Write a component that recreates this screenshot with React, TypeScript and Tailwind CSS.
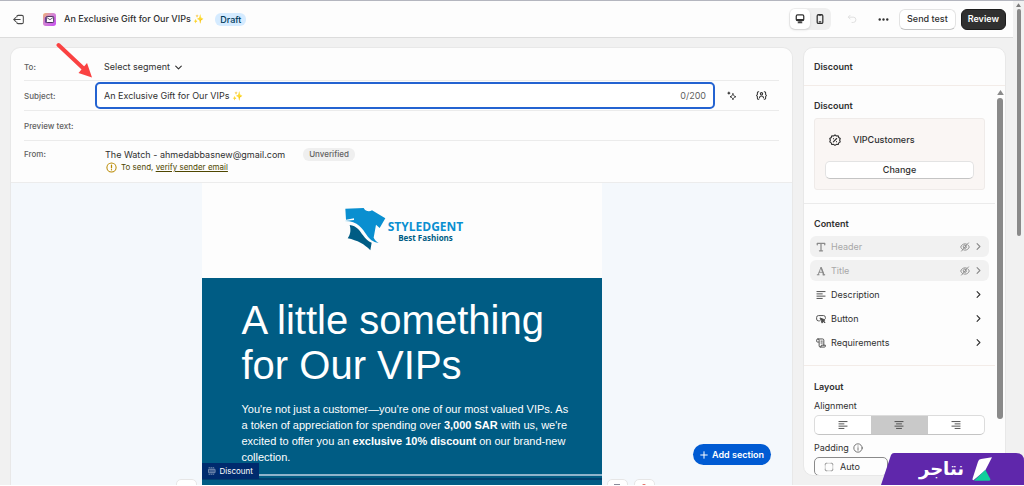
import { useState } from "react";
import type { ReactNode } from "react";

type IconProps = { className?: string };

type ContentItem = {
  label: string;
  icon: (props: IconProps) => ReactNode;
  hidden?: boolean;
};

type Align = "left" | "center" | "right";

// --- ICONS ---
const stroke = {
  fill: "none",
  stroke: "currentColor",
  strokeWidth: 1.5,
  strokeLinecap: "round" as const,
  strokeLinejoin: "round" as const,
  viewBox: "0 0 16 16",
  "aria-hidden": true,
};

function ExitIcon({ className }: IconProps) {
  return (
    <svg {...stroke} className={className}>
      <path d="M5.5 4.5V4A2 2 0 0 1 7.500 2H13a2 2 0 0 1 2 2v8a2 2 0 0 1-2 2H7.500A2 2 0 0 1 5.500 12v-.5" />
      <path d="M10.500 8H1M3.800 5.200 1 8l2.800 2.800" />
    </svg>
  );
}

function DesktopIcon({ className }: IconProps) {
  return (
    <svg {...stroke} className={className}>
      <rect x="2" y="1.500" width="12" height="9" rx="2" strokeWidth="2" />
      <path d="M2.500 8.800h11" strokeWidth="2" />
      <path d="M5 14h6M6.500 11v3M9.500 11v3" strokeWidth="1.800" />
    </svg>
  );
}

function MobileIcon({ className }: IconProps) {
  return (
    <svg {...stroke} strokeWidth={2} className={className}>
      <rect x="3.500" y="1" width="9" height="14" rx="2" />
      <path d="M6.500 1.800h3M6.800 12.500h2.400" />
    </svg>
  );
}

function UndoIcon({ className }: IconProps) {
  return (
    <svg {...stroke} className={className}>
      <path d="M5 2 2 5l3 3M2.500 5H10a4 4 0 0 1 0 8.500H8" />
    </svg>
  );
}

function DotsIcon({ className }: IconProps) {
  return (
    <svg viewBox="0 0 16 16" fill="currentColor" aria-hidden className={className}>
      <circle cx="2.500" cy="8" r="1.700" />
      <circle cx="8" cy="8" r="1.700" />
      <circle cx="13.500" cy="8" r="1.700" />
    </svg>
  );
}

function ChevronDown({ className }: IconProps) {
  return (
    <svg {...stroke} strokeWidth={2} className={className}>
      <path d="m3 5.500 5 5 5-5" />
    </svg>
  );
}

function ChevronRight({ className }: IconProps) {
  return (
    <svg {...stroke} strokeWidth={2} className={className}>
      <path d="m5.500 3 5 5-5 5" />
    </svg>
  );
}

function MagicIcon({ className }: IconProps) {
  return (
    <svg {...stroke} className={className}>
      <path d="M9.500 4.500c.6 2.600 1.600 3.800 4.700 4.700-3.100.9-4.100 2.100-4.700 4.800-.6-2.700-1.600-3.900-4.700-4.800 3.100-.9 4.100-2.100 4.700-4.700Z" />
      <path d="M3 1.800v3M1.500 3.300h3" strokeWidth="1.800" />
    </svg>
  );
}

function VariableIcon({ className }: IconProps) {
  return (
    <svg {...stroke} className={className}>
      <path d="M4 2.500H3.500A1.500 1.500 0 0 0 2 4v2.500L.8 8 2 9.500V12a1.500 1.500 0 0 0 1.500 1.500H4M12 2.500h.5A1.500 1.500 0 0 1 14 4v2.500L15.200 8 14 9.500V12a1.500 1.500 0 0 1-1.500 1.500H12" />
      <circle cx="8" cy="5.500" r="1.700" />
      <path d="M5 11.500c.4-3.600 5.600-3.600 6 0" />
    </svg>
  );
}

function AlertIcon({ className }: IconProps) {
  return (
    <svg {...stroke} className={className}>
      <circle cx="8" cy="8" r="6.700" />
      <path d="M8 4.500v4M8 11v.3" strokeWidth="1.800" />
    </svg>
  );
}

function InfoIcon({ className }: IconProps) {
  return (
    <svg {...stroke} strokeWidth={1.300} className={className}>
      <circle cx="8" cy="8" r="6.700" />
      <path d="M8 7.500v4M8 4.700v.3" />
    </svg>
  );
}

function DiscountIcon({ className }: IconProps) {
  return (
    <svg {...stroke} className={className}>
      <path d="M8 1.200 9.900 2.600 12.300 2.400 13 4.700 15 6 14.200 8.300 15 10.500 13 11.800 12.300 14 9.900 13.800 8 15.200 6.100 13.800 3.700 14 3 11.800 1 10.500 1.800 8.300 1 6 3 4.700 3.700 2.400 6.100 2.600Z" />
      <path d="m5.800 10.400 4.400-4.400M6 6v.2M10 10v.2" />
    </svg>
  );
}

function HeaderIcon({ className }: IconProps) {
  return (
    <svg {...stroke} strokeWidth={2} className={className}>
      <path d="M2 4.500V2h12v2.500M8 2v12M5.500 14h5" />
    </svg>
  );
}

function TitleIcon({ className }: IconProps) {
  return (
    <svg {...stroke} className={className}>
      <path d="M3.500 14 8 2l4.500 12M5 10h6M2 14h3M11 14h3" />
      <path d="m8.500 3 4 11" strokeWidth="2.200" />
    </svg>
  );
}

function LeftLines({ className }: IconProps) {
  return (
    <svg {...stroke} className={className}>
      <path d="M1.500 2.500h13M1.500 6.200h8.500M1.500 9.800h13M1.500 13.500h8.500" />
    </svg>
  );
}

function ButtonIcon({ className }: IconProps) {
  return (
    <svg {...stroke} className={className}>
      <path d="M5.500 11H4a3 3 0 0 1-3-3V5.500a3 3 0 0 1 3-3h8a3 3 0 0 1 3 3V7" />
      <path d="m7 6.500 7.500 3-3 1.300L10 14Z" fill="currentColor" />
      <path d="m11.500 11 2.500 2.500" strokeWidth="2" />
    </svg>
  );
}

function ReceiptIcon({ className }: IconProps) {
  return (
    <svg {...stroke} className={className}>
      <path d="M4 6.500H2.500A1.500 1.500 0 0 1 1 5V3.500a2 2 0 0 1 4 0v9a2 2 0 0 0 2 2h6.500A1.500 1.500 0 0 0 15 13v-1.500H8.500V13a1.500 1.500 0 0 1-1.500 1.500M3 1.500h7.500a2 2 0 0 1 2 2v8M8 5h2M8 8h2" />
    </svg>
  );
}

function HideIcon({ className }: IconProps) {
  return (
    <svg {...stroke} className={className}>
      <path d="M4.500 12.200C2.800 11.300 1.600 9.600 1.200 8 2 5.200 4.600 3 8 3c1 0 2 .2 2.800.6M13.300 5.400c.7.8 1.200 1.700 1.500 2.600-.8 2.800-3.400 5-6.800 5-.6 0-1.100 0-1.600-.2M2.500 14.500l11-13M6 9.300a2.400 2.400 0 0 1 3.200-3.600M10.300 7.600a2.400 2.400 0 0 1-2.500 2.800" />
    </svg>
  );
}

function AlignIcon({ align, className }: IconProps & { align: Align }) {
  const paths = {
    left: "M1.500 2.500h13M1.500 6.200h8M1.500 9.800h13M1.500 13.500h8",
    center: "M1.500 2.500h13M4 6.200h8M1.500 9.800h13M4 13.500h8",
    right: "M1.500 2.500h13M6.500 6.200h8M1.500 9.800h13M6.500 13.500h8",
  };
  return (
    <svg {...stroke} className={className}>
      <path d={paths[align]} />
    </svg>
  );
}

function PaddingIcon({ className }: IconProps) {
  return (
    <svg {...stroke} className={className}>
      <path d="M2 5V3.500A1.500 1.500 0 0 1 3.500 2H5M11 2h1.500A1.500 1.500 0 0 1 14 3.500V5M14 11v1.500a1.500 1.500 0 0 1-1.500 1.500H11M5 14H3.500A1.500 1.500 0 0 1 2 12.500V11" />
      <path d="M7 2h2M7 14h2M2 7v2M14 7v2" opacity=".4" />
    </svg>
  );
}

function SectionIcon({ className }: IconProps) {
  return (
    <svg {...stroke} className={className}>
      <path d="M2 1.500h12M2 14.500h12" strokeDasharray="1.500 2.500" />
      <rect x="2" y="4.500" width="12" height="7" />
      <path d="M2 8h12M6 4.500v7M10 4.500v7" strokeWidth="1" />
    </svg>
  );
}

function AppIcon({ className }: IconProps) {
  return (
    <svg viewBox="0 0 28 28" aria-hidden className={className}>
      <defs>
        <linearGradient id="appBg" x1="0" y1="0" x2="1" y2="1">
          <stop offset="0" stopColor="#f3b26b" />
          <stop offset=".4" stopColor="#d58ad0" />
          <stop offset="1" stopColor="#c94cf5" />
        </linearGradient>
      </defs>
      <rect width="28" height="28" rx="6" fill="url(#appBg)" />
      <path d="M4 21V10l4-3v14Z" fill="#7b3fb8" />
      <rect x="7" y="7.500" width="16" height="13" rx="2" fill="#fff" stroke="#3a2350" strokeWidth="2" />
      <path d="m8 9.500 7 5 7-5" fill="none" stroke="#3a2350" strokeWidth="1.600" />
    </svg>
  );
}

function ShirtLogo({ className }: IconProps) {
  return (
    <svg viewBox="14 12 126 132" aria-hidden className={className}>
      <path
        fill="#0a8fd0"
        d="M18 17L73 15C78 25 90 27 98 22L138 46L121 75L110 65L103 104C107 112 112 116 118 120C100 117 90 108 82 96C70 78 56 54 16 54L44 51V46L20 50Z"
      />
      <path fill="#005c84" d="M31 66C52 68 62 84 71 97C79 108 86 115 97 119L93 142C76 124 54 112 25 106C34 94 35 80 31 66Z" />
    </svg>
  );
}

// --- DATA ---
const contentItems: ContentItem[] = [
  { label: "Header", icon: HeaderIcon, hidden: true },
  { label: "Title", icon: TitleIcon, hidden: true },
  { label: "Description", icon: LeftLines },
  { label: "Button", icon: ButtonIcon },
  { label: "Requirements", icon: ReceiptIcon },
];

const alignments: Align[] = ["left", "center", "right"];

function TopBar() {
  const [device, setDevice] = useState("desktop");

  return (
    <header className="flex h-[37px] shrink-0 items-center border-b border-[#dcdcdc] bg-[#fdfdfd] pr-[7px] pl-[13px]">
      <button aria-label="Exit" className="text-[#4a4a4a]">
        <ExitIcon className="h-[11px] w-[11px]" />
      </button>
      <AppIcon className="ml-[19px] h-[13px] w-[13px]" />
      <h1 className="ml-2 text-[9px] font-medium">An Exclusive Gift for Our VIPs ✨</h1>
      <span className="ml-[11px] rounded-md bg-[#d5ebff] px-[5px] text-[9px] leading-[13px] font-medium text-[#003a5a]">
        Draft
      </span>

      <div className="ml-auto flex items-center">
        <div className="flex rounded-md bg-[#efefef] p-px">
          <button
            aria-label="Desktop preview"
            onClick={() => setDevice("desktop")}
            className={`flex h-5 w-5 items-center justify-center rounded-[5px] ${device === "desktop" ? "bg-white shadow-sm" : ""}`}
          >
            <DesktopIcon className="h-[10px] w-[10px]" />
          </button>
          <button
            aria-label="Mobile preview"
            onClick={() => setDevice("mobile")}
            className={`flex h-5 w-5 items-center justify-center rounded-[5px] ${device === "mobile" ? "bg-white shadow-sm" : ""}`}
          >
            <MobileIcon className="h-[10px] w-[10px]" />
          </button>
        </div>
        <button aria-label="Undo" disabled className="ml-4 text-[#dedede]">
          <UndoIcon className="h-[10px] w-[10px]" />
        </button>
        <button aria-label="More actions" className="ml-[21px]">
          <DotsIcon className="h-[11px] w-[11px]" />
        </button>
        <button className="ml-[10px] h-[21px] rounded-md border border-[#e3e3e3] border-b-[#c4c4c4] bg-white px-[7px] text-[9px] font-medium">
          Send test
        </button>
        <button className="ml-[5px] h-[21px] rounded-md border border-[#1c1c1c] bg-[#303030] px-[6px] text-[9px] font-semibold text-white">
          Review
        </button>
      </div>
    </header>
  );
}

function EmailFields() {
  const [subject, setSubject] = useState("An Exclusive Gift for Our VIPs ✨");
  const [preview, setPreview] = useState("");

  return (
    <div className="shrink-0 border-b border-[#ececec] px-[13px] text-[9px]">
      <div className="flex h-[33px] items-center border-b border-[#ebebeb] pt-[6px]">
        <span className="w-[80px] text-[8px] font-medium text-[#616161]">To:</span>
        <button className="flex items-center gap-1">
          Select segment
          <ChevronDown className="h-[9px] w-[9px]" />
        </button>
      </div>

      <div className="flex h-[30px] items-center border-b border-[#ebebeb]">
        <label htmlFor="subject" className="w-[71px] text-[8px] font-medium text-[#616161]">
          Subject:
        </label>
        <div className="flex h-[27px] flex-1 items-center rounded-[5px] border-2 border-[#2463d1] bg-white px-[7px]">
          <input
            id="subject"
            value={subject}
            onChange={(e) => setSubject(e.target.value)}
            className="min-w-0 flex-1 bg-transparent outline-none"
          />
          <span className="text-[#616161]">0/200</span>
        </div>
        <button aria-label="Generate subject" className="ml-3">
          <MagicIcon className="h-[10px] w-[10px]" />
        </button>
        <button aria-label="Insert variable" className="mr-3 ml-[19px]">
          <VariableIcon className="h-[11px] w-[11px]" />
        </button>
      </div>

      <div className="flex h-[30px] items-center border-b border-[#ebebeb]">
        <label htmlFor="preview" className="w-[80px] text-[8px] font-medium text-[#616161]">
          Preview text:
        </label>
        <input
          id="preview"
          value={preview}
          onChange={(e) => setPreview(e.target.value)}
          className="min-w-0 flex-1 bg-transparent outline-none"
        />
      </div>

      <div className="flex h-[41px] items-start pt-[7px] leading-[13px]">
        <span className="w-[81px] text-[8px] font-medium text-[#616161]">From:</span>
        <div>
          <div className="flex items-center">
            The Watch - ahmedabbasnew@gmail.com
            <span className="ml-[18px] rounded-md bg-[#efefef] px-[6px] text-[8px] font-medium text-[#616161]">
              Unverified
            </span>
          </div>
          <div className="flex items-center gap-1 text-[#4f4700]">
            <AlertIcon className="ml-px h-[11px] w-[11px] text-[#b98900]" />
            <span className="text-[8px]">
              To send,{" "}
              <a href="#verify" className="underline">
                verify sender email
              </a>
            </span>
          </div>
        </div>
      </div>
    </div>
  );
}

function EmailCanvas() {
  return (
    <div className="relative min-h-0 flex-1 overflow-hidden bg-[#f4f8fc]">
      <article className="mx-auto w-[400px] bg-[#fdfdfd]">
        <div className="flex h-[95px] items-center justify-center gap-[2px] pl-1">
          <ShirtLogo className="mb-1 h-[44px] w-[42px]" />
          <div className="flex flex-col items-center pt-[2px] font-['Open_Sans',sans-serif] font-bold">
            <span className="text-[12px] leading-[12px] text-[#0a8fd0]">STYLEDGENT</span>
            <span className="text-[8px] leading-[10px] text-[#005c84]">Best Fashions</span>
          </div>
        </div>
        <div className="relative bg-[#005c84] pt-5 pr-7 pb-[9px] pl-10 font-['Liberation_Sans',Arial,sans-serif] text-white">
          <h2 className="text-[40px] leading-[45px]">
            A little something
            <br />
            for Our VIPs
          </h2>
          <p className="mt-[13px] text-[11px] leading-4">
            You're not just a customer—you're one of our most valued VIPs. As a token of appreciation for spending over{" "}
            <strong>3,000 SAR</strong> with us, we're excited to offer you an <strong>exclusive 10% discount</strong> on
            our brand-new collection.
          </p>
          <span className="absolute -bottom-[5px] left-0 flex h-4 items-center gap-1 bg-[#002b6e] px-[6px] font-['Inter',sans-serif] text-[8px]">
            <SectionIcon className="h-2 w-2 opacity-60" />
            Discount
          </span>
        </div>
        <div className="border-t-2 border-[#8fb3cb] bg-[#005c84] pt-[2px]">
          <div className="h-10 border-t-2 border-[#00406f]" />
        </div>
      </article>

      {/* Section toolbar, cut off by the bottom edge */}
      <div className="absolute right-1/2 bottom-0 mr-[205px] h-[6px] overflow-hidden">
        <button aria-label="Move section" className="h-5 w-[21px] rounded-[5px] border border-[#e6e6e6] bg-white" />
      </div>
      <div className="absolute bottom-0 left-1/2 ml-[205px] flex h-[6px] gap-[6px] overflow-hidden">
        <button
          aria-label="Duplicate section"
          className="flex h-5 w-[21px] justify-center rounded-[5px] border border-[#e6e6e6] bg-white pt-1"
        >
          <span className="h-2 w-[6px] bg-[#8a8a9a]" />
        </button>
        <button
          aria-label="Delete section"
          className="flex h-5 w-[21px] justify-center rounded-[5px] border border-[#e6e6e6] bg-white pt-1"
        >
          <span className="h-2 w-1 rounded-t-full bg-[#e06a5f]" />
        </button>
      </div>

      <button className="absolute right-[21px] bottom-5 flex h-[21px] items-center gap-1 rounded-full bg-[#005bd3] px-[7px] text-[9px] font-semibold text-white">
        <svg {...stroke} strokeWidth={2} className="h-2 w-2">
          <path d="M8 1.500v13M1.500 8h13" />
        </svg>
        Add section
      </button>
    </div>
  );
}

function SettingsPanel() {
  const [align, setAlign] = useState<Align>("center");
  const [padding, setPadding] = useState("Auto");

  return (
    <aside className="flex w-[203px] shrink-0 flex-col overflow-hidden rounded-[10px] border border-[#e8e8e8] bg-[#fdfdfd] text-[9px]">
      <h2 className="flex h-[38px] shrink-0 items-center border-b border-[#f3ece8] px-[10px] font-semibold">Discount</h2>

      <div className="flex min-h-0 flex-1">
        <div className="min-w-0 flex-1">
          <section className="border-b border-[#ebebeb] px-[10px] py-[13px]">
            <h3 className="leading-[13px] font-semibold">Discount</h3>
            <div className="mt-[6px] rounded-[3px] border border-[#efebe9] bg-[#faf6f4] px-[10px] pb-[10px]">
              <div className="flex h-[42px] items-center gap-3 pl-1 font-medium">
                <DiscountIcon className="h-[12px] w-[12px]" />
                VIPCustomers
              </div>
              <button className="h-[18px] w-full rounded-[5px] border border-[#e3e3e3] border-b-[#c4c4c4] bg-white text-[9px] font-medium">
                Change
              </button>
            </div>
          </section>

          <section className="border-b border-[#f3ece8] px-[6px] pt-[13px] pb-3">
            <h3 className="px-1 leading-[13px] font-semibold">Content</h3>
            <ul className="mt-[6px] space-y-[3px]">
              {contentItems.map((item) => (
                <li key={item.label}>
                  <button
                    className={`flex h-[21px] w-full items-center rounded-md px-[6px] ${item.hidden ? "bg-[#f1f1f1] text-[#a8a8a8]" : ""}`}
                  >
                    <item.icon className={`h-[10px] w-[10px] ${item.hidden ? "text-[#8a8a8a]" : "text-[#4a4a4a]"}`} />
                    <span className="ml-[5px]">{item.label}</span>
                    <span className="ml-auto flex items-center gap-1">
                      {item.hidden && <HideIcon className="h-[10px] w-[10px] text-[#8a8a8a]" />}
                      <ChevronRight className={`h-[9px] w-[9px] ${item.hidden ? "text-[#8a8a8a]" : ""}`} />
                    </span>
                  </button>
                </li>
              ))}
            </ul>
          </section>

          <section className="px-[10px] pt-[14px]">
            <h3 className="leading-[13px] font-semibold">Layout</h3>
            <div className="mt-[6px] leading-[13px]">Alignment</div>
            <div className="mt-[3px] flex h-5 overflow-hidden rounded-[5px] border border-[#dcdcdc] border-b-[#c4c4c4] bg-white">
              {alignments.map((value) => (
                <button
                  key={value}
                  aria-label={`Align ${value}`}
                  aria-pressed={align === value}
                  onClick={() => setAlign(value)}
                  className={`flex flex-1 items-center justify-center text-[#4a4a4a] ${align === value ? "bg-[#c9c9c9]" : ""}`}
                >
                  <AlignIcon align={value} className="h-[10px] w-[10px]" />
                </button>
              ))}
            </div>
            <label htmlFor="padding" className="mt-[6px] flex items-center gap-1 leading-[13px]">
              Padding
              <InfoIcon className="h-[10px] w-[10px] text-[#5a5a5a]" />
            </label>
            <div className="mt-[3px] flex h-[19px] w-[74px] items-center gap-[6px] rounded-[5px] border border-[#8a8a8a] px-[9px]">
              <PaddingIcon className="h-[10px] w-[10px] shrink-0 text-[#8a8a8a]" />
              <input
                id="padding"
                value={padding}
                onChange={(e) => setPadding(e.target.value)}
                className="w-full min-w-0 bg-transparent outline-none"
              />
            </div>
          </section>
        </div>

        <div className="flex w-[10px] flex-col items-center pt-1">
          <svg viewBox="0 0 8 6" aria-hidden className="h-[5px] w-[7px]">
            <path d="M4 0 8 6H0Z" fill="#8a8a8a" />
          </svg>
          <div className="mt-[3px] h-5/6 w-[6px] rounded-full bg-[#8a8a8a]" />
        </div>
      </div>
    </aside>
  );
}

export default function App() {
  return (
    <div className="relative flex h-screen overflow-hidden border-t border-b border-t-[#b4b6bf] border-b-white bg-[#f1f1f1] font-['Inter',sans-serif] text-[#303030]">
      <div className="flex min-w-0 flex-1 flex-col">
        <TopBar />
        <div className="flex min-h-0 flex-1 gap-[10px] pt-[9px] pr-[7px] pl-[10px]">
          <main className="flex min-w-0 flex-1 flex-col overflow-hidden rounded-t-[10px] border border-b-0 border-[#e8e8e8] bg-[#fdfdfd]">
            <EmailFields />
            <EmailCanvas />
          </main>
          <div className="flex pb-[9px]">
            <SettingsPanel />
          </div>
        </div>
      </div>

      {/* Page scrollbar */}
      <div className="flex w-[11px] flex-col items-center pt-[2px]">
        <svg viewBox="0 0 8 6" aria-hidden className="h-1 w-[5px]">
          <path d="M4 0 8 6H0Z" fill="#7a7a7a" />
        </svg>
        <div className="mt-[2px] h-[47%] w-1 rounded-full bg-[#8a8a8a]" />
      </div>

      {/* Pointer to the subject field */}
      <svg viewBox="0 0 36 36" aria-hidden className="absolute top-[41px] left-14 h-9 w-9">
        <path d="M2.500 3 28 27" stroke="#fa4242" strokeWidth="4" strokeLinecap="round" />
        <path d="M36 35.500 22.500 31 31 21Z" fill="#fa4242" />
      </svg>

      {/* Brand ribbon */}
      <div className="absolute right-0 bottom-0 flex h-8 w-[143px] items-center justify-end gap-2 pr-8">
        <svg viewBox="0 0 143 32" preserveAspectRatio="none" aria-hidden className="absolute inset-0 h-full w-full">
          <path d="M0 32 10 2Q11 0 13 0H135Q143 0 143 8V32Z" fill="#5f27ab" />
        </svg>
        <span lang="ar" dir="rtl" className="relative font-['DejaVu_Sans',sans-serif] text-[18px] leading-6 font-bold text-white">
          نتاجر
        </span>
        <svg viewBox="0 0 60 72" aria-hidden className="relative h-6 w-5">
          <path d="M18 14Q20 7 27 6L60 1 40 40 4 70Q0 70 2 64Z" fill="#fff" />
          <path d="M40 38 55 66Q57 71 51 71H6Z" fill="#12cf9b" />
        </svg>
      </div>
    </div>
  );
}
